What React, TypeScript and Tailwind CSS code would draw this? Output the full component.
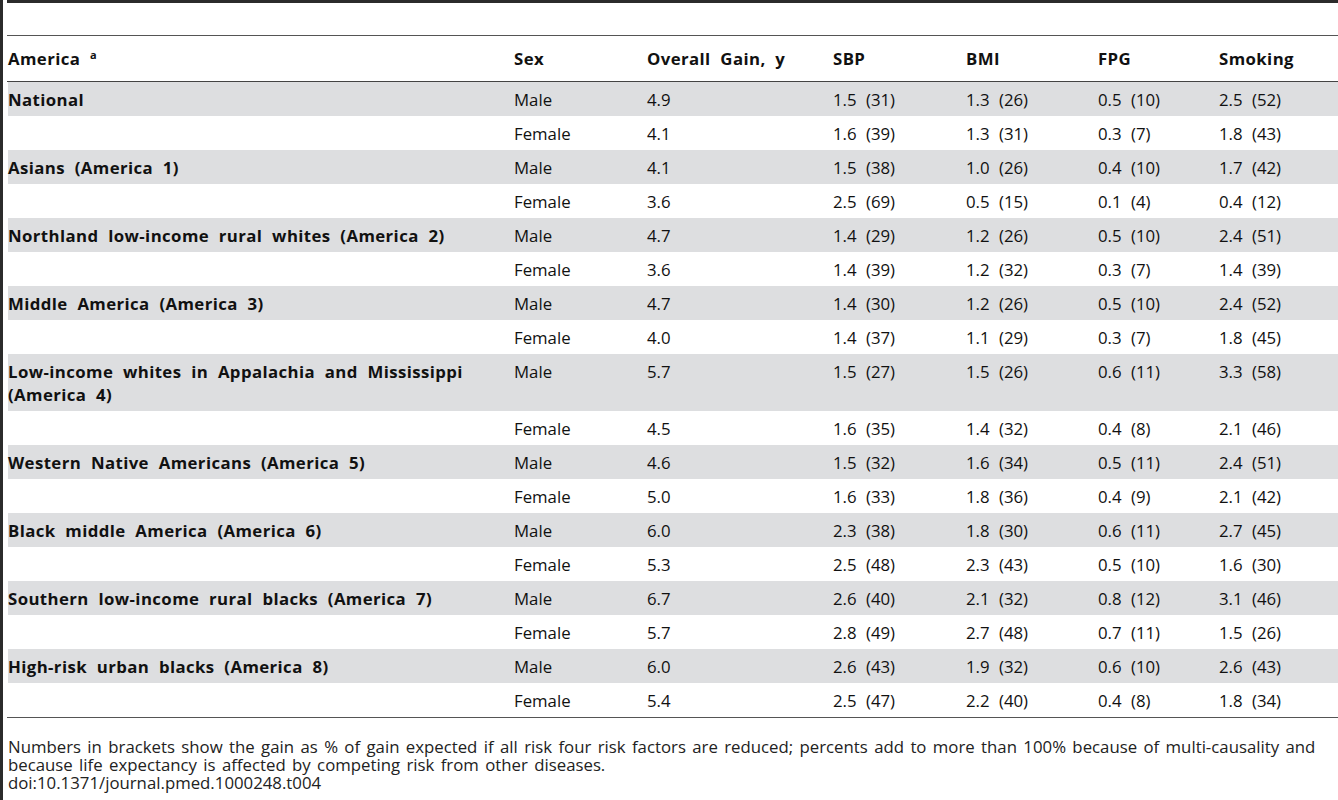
import React from "react";

type Row = { name?: string; sex: string; gain: string; sbp: string; bmi: string; fpg: string; smk: string; shade: boolean };

const groups: [string, string[], string[]][] = [
  ["National", ["4.9", "1.5 (31)", "1.3 (26)", "0.5 (10)", "2.5 (52)"], ["4.1", "1.6 (39)", "1.3 (31)", "0.3 (7)", "1.8 (43)"]],
  ["Asians (America 1)", ["4.1", "1.5 (38)", "1.0 (26)", "0.4 (10)", "1.7 (42)"], ["3.6", "2.5 (69)", "0.5 (15)", "0.1 (4)", "0.4 (12)"]],
  ["Northland low-income rural whites (America 2)", ["4.7", "1.4 (29)", "1.2 (26)", "0.5 (10)", "2.4 (51)"], ["3.6", "1.4 (39)", "1.2 (32)", "0.3 (7)", "1.4 (39)"]],
  ["Middle America (America 3)", ["4.7", "1.4 (30)", "1.2 (26)", "0.5 (10)", "2.4 (52)"], ["4.0", "1.4 (37)", "1.1 (29)", "0.3 (7)", "1.8 (45)"]],
  ["Low-income whites in Appalachia and Mississippi (America 4)", ["5.7", "1.5 (27)", "1.5 (26)", "0.6 (11)", "3.3 (58)"], ["4.5", "1.6 (35)", "1.4 (32)", "0.4 (8)", "2.1 (46)"]],
  ["Western Native Americans (America 5)", ["4.6", "1.5 (32)", "1.6 (34)", "0.5 (11)", "2.4 (51)"], ["5.0", "1.6 (33)", "1.8 (36)", "0.4 (9)", "2.1 (42)"]],
  ["Black middle America (America 6)", ["6.0", "2.3 (38)", "1.8 (30)", "0.6 (11)", "2.7 (45)"], ["5.3", "2.5 (48)", "2.3 (43)", "0.5 (10)", "1.6 (30)"]],
  ["Southern low-income rural blacks (America 7)", ["6.7", "2.6 (40)", "2.1 (32)", "0.8 (12)", "3.1 (46)"], ["5.7", "2.8 (49)", "2.7 (48)", "0.7 (11)", "1.5 (26)"]],
  ["High-risk urban blacks (America 8)", ["6.0", "2.6 (43)", "1.9 (32)", "0.6 (10)", "2.6 (43)"], ["5.4", "2.5 (47)", "2.2 (40)", "0.4 (8)", "1.8 (34)"]],
];

const rows: Row[] = [];
groups.forEach(([name, m, f]) => {
  rows.push({ name, sex: "Male", gain: m[0], sbp: m[1], bmi: m[2], fpg: m[3], smk: m[4], shade: true });
  rows.push({ sex: "Female", gain: f[0], sbp: f[1], bmi: f[2], fpg: f[3], smk: f[4], shade: false });
});

const gridCols = "grid grid-cols-[506px_133px_186px_133px_132px_121px_1fr]";

export default function App() {
  return (
    <div className="flex min-h-[800px] bg-white text-[#111] font-['Open_Sans',sans-serif]">
      <div className="w-[3px] shrink-0 bg-[#2b2b2b]" />
      <div className="flex-1 pl-[4px]">
        <div className="h-[3px] bg-[#2b2b2b]" />
        <div className="h-[32px]" />
        <div className="border-t border-[#555]" />
        <div className={`${gridCols} h-[45px] items-center pl-[1px] text-[16.8px] font-bold tracking-[0.4px] [word-spacing:5px]`}>
          <div>
            America <sup className="text-[11px] font-bold">a</sup>
          </div>
          <div>Sex</div>
          <div>Overall Gain, y</div>
          <div>SBP</div>
          <div>BMI</div>
          <div>FPG</div>
          <div>Smoking</div>
        </div>
        <div className="border-t border-[#444]" />
        <div className="text-[16.8px] leading-[23px] [word-spacing:5px]">
          {rows.map((r, i) => (
            <div key={i} className={`${gridCols} ml-[1px] py-[5.5px] ${r.shade ? "bg-[#dddee0]" : ""}`}>
              <div className="pr-[30px] font-bold tracking-[0.4px]">{r.name ?? ""}</div>
              <div>{r.sex}</div>
              <div>{r.gain}</div>
              <div>{r.sbp}</div>
              <div>{r.bmi}</div>
              <div>{r.fpg}</div>
              <div>{r.smk}</div>
            </div>
          ))}
        </div>
        <div className="border-t border-[#555]" />
        <div className="pl-[1px] pr-[8px] pt-[20px] text-[16.8px] leading-[18px] text-[#222] [word-spacing:2px]">
          <p>
            Numbers in brackets show the gain as % of gain expected if all risk four risk factors are reduced; percents add to more than 100% because of multi-causality and because life expectancy is affected by competing risk from other diseases.
          </p>
          <p>doi:10.1371/journal.pmed.1000248.t004</p>
        </div>
      </div>
    </div>
  );
}
